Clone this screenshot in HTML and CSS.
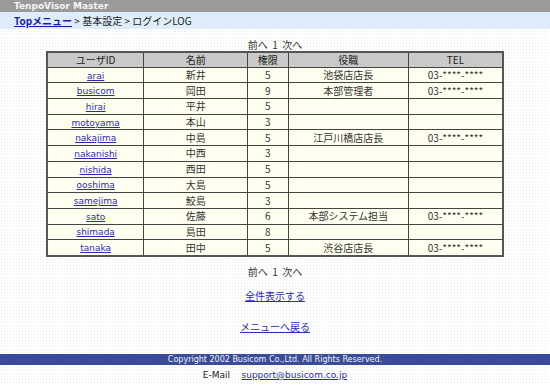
FILE: index.html
```html
<!DOCTYPE html>
<html lang="ja">
<head>
<meta charset="utf-8">
<title>TenpoVisor Master</title>
<link rel="stylesheet" href="styles.css">
</head>
<body>
<div class="titlebar">TenpoVisor Master</div>
<div class="crumbs"><a href="#" class="toplink">Topメニュー</a> &gt; 基本設定 &gt; ログインLOG</div>
<div class="content">
  <div class="pager pager-top">前へ&nbsp;&nbsp;1&nbsp;&nbsp;次へ</div>
  <table class="grid">
    <thead>
      <tr><th class="c1">ユーザID</th><th class="c2">名前</th><th class="c3">権限</th><th class="c4">役職</th><th class="c5">TEL</th></tr>
    </thead>
    <tbody>
      <tr><td><a href="#">arai</a></td><td>新井</td><td>5</td><td>池袋店店長</td><td>03-****-****</td></tr>
      <tr><td><a href="#">busicom</a></td><td>岡田</td><td>9</td><td>本部管理者</td><td>03-****-****</td></tr>
      <tr><td><a href="#">hirai</a></td><td>平井</td><td>5</td><td></td><td></td></tr>
      <tr><td><a href="#">motoyama</a></td><td>本山</td><td>3</td><td></td><td></td></tr>
      <tr><td><a href="#">nakajima</a></td><td>中島</td><td>5</td><td>江戸川橋店店長</td><td>03-****-****</td></tr>
      <tr><td><a href="#">nakanishi</a></td><td>中西</td><td>3</td><td></td><td></td></tr>
      <tr><td><a href="#">nishida</a></td><td>西田</td><td>5</td><td></td><td></td></tr>
      <tr><td><a href="#">ooshima</a></td><td>大島</td><td>5</td><td></td><td></td></tr>
      <tr><td><a href="#">samejima</a></td><td>鮫島</td><td>3</td><td></td><td></td></tr>
      <tr><td><a href="#">sato</a></td><td>佐藤</td><td>6</td><td>本部システム担当</td><td>03-****-****</td></tr>
      <tr><td><a href="#">shimada</a></td><td>島田</td><td>8</td><td></td><td></td></tr>
      <tr><td><a href="#">tanaka</a></td><td>田中</td><td>5</td><td>渋谷店店長</td><td>03-****-****</td></tr>
    </tbody>
  </table>
  <div class="pager pager-bottom">前へ&nbsp;&nbsp;1&nbsp;&nbsp;次へ</div>
  <div class="link-line"><a href="#">全件表示する</a></div>
  <div class="link-line back"><a href="#">メニューへ戻る</a></div>
</div>
<div class="footer">Copyright 2002 Busicom Co.,Ltd. All Rights Reserved.</div>
<div class="mail">E-Mail&nbsp;&nbsp;&nbsp;&nbsp;<a href="#">support@busicom.co.jp</a></div>
</body>
</html>
```
FILE: styles.css
```css
html, body {
  margin: 0;
  padding: 0;
}
body {
  font-family: "Noto Sans CJK JP", "DejaVu Sans", sans-serif;
  font-size: 10px;
  color: #222;
  background-color: #ffffff;
  background-image: radial-gradient(circle, #ececec 0.6px, transparent 0.7px);
  background-size: 3px 3px;
  width: 550px;
  height: 385px;
  overflow: hidden;
}
a { color: #2a2ab8; text-decoration: underline; }
.titlebar {
  height: 12px;
  line-height: 12px;
  background: #9a9a9a;
  color: #f4f4f4;
  font-family: "DejaVu Sans", sans-serif;
  font-weight: bold;
  font-size: 9px;
  padding-left: 14px;
}
.crumbs {
  height: 17px;
  line-height: 17px;
  background: #deedf9;
  padding-left: 14px;
  font-size: 10px;
  color: #222;
}
.crumbs .toplink { font-weight: bold; color: #1a1aa8; }
.content {
  display: flex;
  flex-direction: column;
  align-items: center;
}
.pager { line-height: 12px; color: #333; }
.pager-top { margin-top: 10px; margin-bottom: 0; }
.grid {
  border-collapse: collapse;
  border: 2px solid #555;
  width: 458px;
  background: #fffff0;
}
.grid th, .grid td {
  border: 1px solid #444;
  text-align: center;
  padding: 0;
  font-weight: normal;
  height: 14.7px;
  line-height: 12px;
  font-size: 10px;
  color: #333;
}
.grid th { background: #c9c9c9; color: #222; height: 13.7px; }
.grid td a { font-family: "DejaVu Sans", sans-serif; font-size: 9px; color: #2a2ab8; }
.c1 { width: 96px; }
.c2 { width: 104px; }
.c3 { width: 40px; }
.c4 { width: 121px; }
.c5 { width: 94px; }
.pager-bottom { margin-top: 9px; }
.link-line { margin-top: 12px; line-height: 12px; }
.link-line.back { margin-top: 19px; }
.footer {
  margin-top: 21px;
  height: 11px;
  line-height: 11px;
  background: #3b4b9b;
  color: #f2f2f2;
  text-align: center;
  font-size: 8px;
  font-family: "DejaVu Sans", sans-serif;
}
.mail {
  text-align: center;
  margin-top: 4px;
  line-height: 12px;
  font-size: 9px;
  font-family: "DejaVu Sans", sans-serif;
}
```
